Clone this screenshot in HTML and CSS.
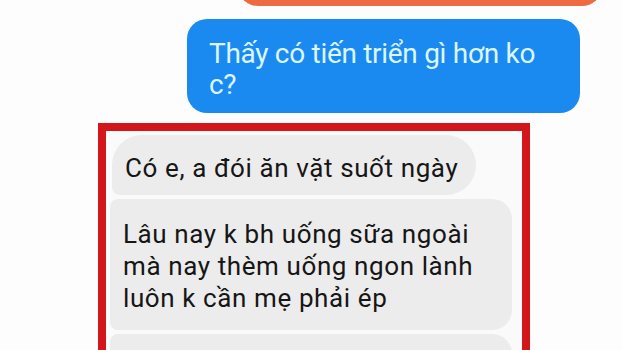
FILE: index.html
```html
<!DOCTYPE html>
<html lang="vi">
<head>
  <meta charset="UTF-8" />
  <meta name="viewport" content="width=device-width, initial-scale=1.0"/>
  <title>Tin nhắn</title>
  <link rel="stylesheet" href="styles.css">
</head>
<body>

  <div class="thread">
    <div class="row out">
      <div class="bubble orange"></div>
    </div>

    <div class="row out">
      <div class="bubble blue">Thấy có tiến triển gì hơn ko c?</div>
    </div>

    <div class="highlight">
      <div class="bubble gray first">Có e, a đói ăn vặt suốt ngày</div>
      <div class="bubble gray middle">Lâu nay k bh uống sữa ngoài mà nay thèm uống ngon lành luôn k cần mẹ phải ép</div>
      <div class="bubble gray last"></div>
    </div>
  </div>

</body>
</html>
```

FILE: styles.css
```css
* { box-sizing: border-box; }

html, body {
  height: 100%;
  overflow: hidden;
}

body {
  margin: 0;
  background: #fdfdfd;
  font-family: Roboto, 'Noto Sans', sans-serif;
}

.thread {
  display: flex;
  flex-direction: column;
}

.row {
  display: flex;
}

.bubble {
  border-radius: 20px;
}

.orange {
  margin: -34px 0 0 238px;
  width: 364px;
  height: 40px;
  background: #ee6a42;
}

.blue {
  margin: 13px 0 0 187px;
  width: 393px;
  padding: 19px 34px 13px 22px;
  background: #1a8af0;
  color: #dcf6ff;
  font-size: 28px;
  line-height: 31px;
  letter-spacing: -0.3px;
}

.highlight {
  margin: 10px 0 0 98px;
  width: 432px;
  height: 300px;
  border: 8px solid #d2161b;
  background: #fafafa;
  padding: 4px 10px 0 4px;
  display: flex;
  flex-direction: column;
  align-items: flex-start;
  gap: 4px;
}

.gray {
  background: #ececec;
  color: #161616;
  font-size: 26px;
  line-height: 32px;
  letter-spacing: 0.6px;
  padding: 0 18px 0 13px;
}

.first {
  margin-left: 2px;
  padding-top: 17px;
  padding-bottom: 11px;
  border-radius: 30px 30px 30px 8px;
}

.middle {
  width: 402px;
  padding-top: 19px;
  padding-bottom: 16px;
  padding-right: 19px;
  border-radius: 8px 20px 20px 8px;
}

.last {
  width: 402px;
  height: 60px;
  border-radius: 8px 20px 20px 8px;
}
```
